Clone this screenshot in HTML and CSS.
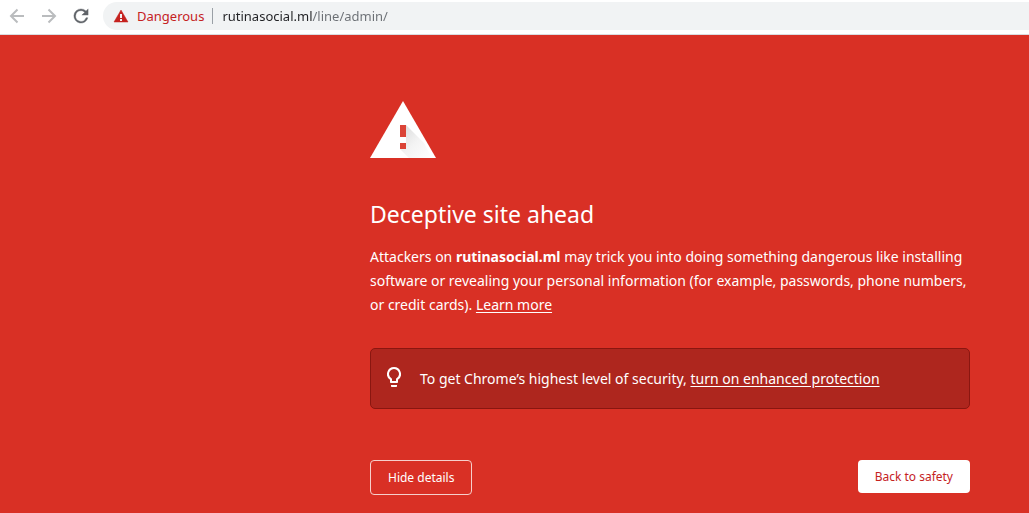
FILE: index.html
```html
<!DOCTYPE html>
<html lang="en">
<head>
<meta charset="utf-8">
<title>Security error</title>
<meta name="viewport" content="width=device-width, initial-scale=1">
<link rel="stylesheet" href="styles.css">
</head>
<body>
<header class="toolbar">
  <nav class="nav" aria-label="Browser navigation">
    <button class="nav-button nav-button--off" type="button" aria-label="Back">
      <svg viewBox="0 0 16 16" width="16" height="16" fill="none" stroke="currentColor" stroke-width="2"><path d="M15 8H2M8.500 1.500 2 8l6.500 6.500"/></svg>
    </button>
    <button class="nav-button nav-button--off" type="button" aria-label="Forward">
      <svg viewBox="0 0 16 16" width="16" height="16" fill="none" stroke="currentColor" stroke-width="2"><path d="M1 8h13M7.500 1.500 14 8l-6.500 6.500"/></svg>
    </button>
    <button class="nav-button" type="button" aria-label="Reload">
      <svg viewBox="3 3 18 18" width="16" height="16" fill="currentColor"><path d="M17.650 6.350A7.960 7.960 0 0 0 12 4a8 8 0 1 0 7.730 10h-2.080A6 6 0 1 1 12 6c1.660 0 3.140.69 4.220 1.780L13 11h7V4z" stroke="currentColor" stroke-width=".4"/></svg>
    </button>
  </nav>
  <div class="omnibox">
    <button class="chip" type="button">
      <svg viewBox="0 0 16 14" width="16" height="14"><path d="M8 1 15 13H1z" fill="#c5221f" stroke="#c5221f" stroke-width=".5"/><path d="M7 5h2v4H7zM7 10h2v2H7z" fill="#f1f3f4"/></svg>
      <span>Dangerous</span>
    </button>
    <input class="address" type="text" aria-label="Address" value="rutinasocial.ml/line/admin/">
  </div>
</header>
<main class="warning">
  <div class="content">
    <svg class="warning-icon" viewBox="0 0 66 57" width="66" height="57" aria-hidden="true">
      <defs>
        <linearGradient id="shade" x1="0" y1="0" x2="1" y2="1"><stop offset="0" stop-color="#d8d8d8"/><stop offset="0.500" stop-color="#f3f3f3"/><stop offset="1" stop-color="#fff"/></linearGradient>
      </defs>
      <path d="M33 0 66 57H0z" fill="#fff"/>
      <path d="M36 24 54 42 62 57H39L30 48V43l6-1 0-6z" fill="url(#shade)"/>
      <path d="M30 24h6v12h-6zM30 42h6v6h-6z" fill="#db4437"/>
    </svg>
    <h1 class="title">Deceptive site ahead</h1>
    <p class="message">Attackers on <strong>rutinasocial.ml</strong> may trick you into doing something dangerous like installing software or revealing your personal information (for example, passwords, phone numbers, or credit cards). <a class="link" href="#learn">Learn more</a></p>
    <div class="promo">
      <svg class="bulb" viewBox="5 2 14 20" width="14" height="20" aria-hidden="true"><path fill="#fff" d="M9 21c0 .55.45 1 1 1h4c.55 0 1-.45 1-1v-1H9zm3-19a7 7 0 0 0-4 12.740V17c0 .55.45 1 1 1h6c.55 0 1-.45 1-1v-2.260A7 7 0 0 0 12 2zm2.850 11.100-.85.6V16h-4v-2.300l-.85-.6A5 5 0 1 1 14.850 13.100z"/></svg>
      <p class="promo-text">To get Chrome’s highest level of security, <a class="link" href="#protection">turn on enhanced protection</a></p>
    </div>
    <div class="actions">
      <button class="button button--outline" type="button">Hide details</button>
      <button class="button button--solid" type="button">Back to safety</button>
    </div>
  </div>
</main>
</body>
</html>
```
FILE: styles.css
```css
* {
  box-sizing: border-box;
}

body {
  margin: 0;
  min-height: 100vh;
  display: flex;
  flex-direction: column;
  background: #d93025;
  font-family: "Noto Sans", "Open Sans", sans-serif;
}

button {
  font: inherit;
  cursor: pointer;
}

svg {
  display: block;
  flex: none;
}

.toolbar {
  display: flex;
  align-items: center;
  gap: 14px;
  height: 35px;
  padding: 0 0 3px 9px;
  background: #fff;
  border-bottom: 1px solid #dadce0;
}

.nav {
  display: flex;
  gap: 16px;
}

.nav-button {
  padding: 0;
  border: 0;
  background: none;
  color: #5f6368;
}

.nav-button--off {
  color: #babcbe;
}

.omnibox {
  flex: 1;
  min-width: 0;
  display: flex;
  align-items: center;
  height: 28px;
  padding-left: 10px;
  background: #f1f3f4;
  border-radius: 14px 0 0 14px;
}

.chip {
  display: flex;
  align-items: center;
  gap: 8px;
  padding: 0 8px 0 0;
  border: 0;
  border-right: 1px solid #9aa0a6;
  background: none;
  color: #c5221f;
  font-size: 13px;
  line-height: 16px;
}

.address {
  flex: 1;
  min-width: 0;
  padding: 0;
  margin-left: 9px;
  border: 0;
  background: linear-gradient(90deg, #202124 90px, #6b6f74 90px);
  background-clip: text;
  color: transparent;
  font: inherit;
  font-size: 13px;
}

.warning {
  flex: 1;
  padding: 66px 59px 18px;
  color: #fff;
}

.content {
  max-width: 600px;
  margin-left: auto;
}

.title {
  margin: 40px 0 15px;
  font-size: 23px;
  font-weight: 400;
  line-height: 32px;
}

.message {
  margin: 0;
  font-size: 14px;
  line-height: 24px;
}

.link {
  color: inherit;
  text-underline-offset: 2px;
}

.promo {
  display: flex;
  align-items: center;
  gap: 19px;
  margin-top: 31px;
  padding: 18px 16px;
  background: #ae261e;
  border: 1px solid #8a1610;
  border-radius: 5px;
}

.bulb {
  margin-bottom: 3px;
}

.promo-text {
  margin: 0;
  font-size: 14px;
  line-height: 23px;
}

.actions {
  display: flex;
  justify-content: space-between;
  align-items: flex-start;
  gap: 16px;
  margin-top: 51px;
}

.button {
  padding: 8px 17px;
  border-radius: 4px;
  font-size: 12px;
  line-height: 17px;
}

.button--outline {
  border: 1px solid #f6cfcb;
  background: none;
  color: #fff;
}

.button--solid {
  border: 0;
  background: #fff;
  color: #c5221f;
}
```
